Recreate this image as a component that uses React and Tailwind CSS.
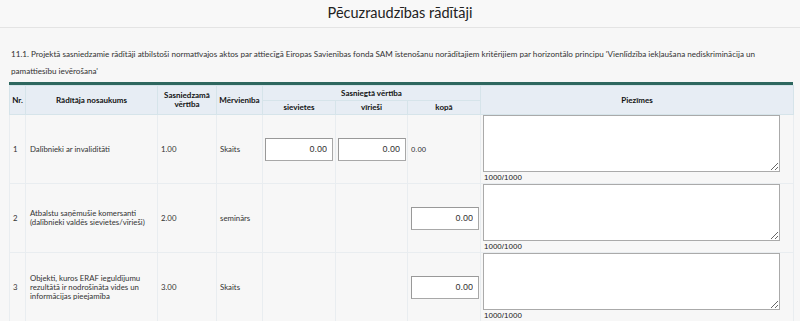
import { useState } from 'react';

const rows = [
  {
    nr: '1',
    name: 'Dalībnieki ar invaliditāti',
    target: '1.00',
    unit: 'Skaits',
    split: true,
  },
  {
    nr: '2',
    name: 'Atbalstu saņēmušie komersanti (dalībnieki valdēs sievietes/vīrieši)',
    target: '2.00',
    unit: 'seminārs',
    split: false,
  },
  {
    nr: '3',
    name: 'Objekti, kuros ERAF ieguldījumu rezultātā ir nodrošināta vides un informācijas pieejamība',
    target: '3.00',
    unit: 'Skaits',
    split: false,
  },
];

const th = 'border border-[#d6e4ea] font-bold text-[8px] leading-[9px] text-[#111] text-center align-middle';
const td = 'border border-[#e9edf0] text-[7.8px] leading-[9px] text-[#333] align-middle';

const NumInput = () => (
  <input
    type="text"
    defaultValue="0.00"
    className="w-[68px] h-[23px] border border-[#a8a8a8] border-t-[#999] border-l-[#999] bg-white text-right pr-[5px] text-[9px] text-[#333] font-['Liberation_Sans',Arial,sans-serif] outline-none"
  />
);

const Notes = () => {
  const [text, setText] = useState('');
  return (
    <div className="flex flex-col pl-[2px]">
      <textarea
        value={text}
        onChange={(e) => setText(e.target.value)}
        className="block w-[297px] h-[57px] border border-[#aaa] bg-white resize-y outline-none"
      />
      <span className="pl-[1px] text-[8px] leading-[11px] text-[#222] font-['Liberation_Sans',Arial,sans-serif]">
        {1000 - text.length}/1000
      </span>
    </div>
  );
};

const App = () => {
  return (
    <div className="min-h-screen bg-[#f7f7f7] font-['Lato',sans-serif]">
      <div className="h-[28px] bg-[#f8f8f8] border-b border-[#e4e4e4] flex items-center justify-center">
        <h1 className="text-[14.5px] leading-none text-[#222] pb-[1px]">Pēcuzraudzības rādītāji</h1>
      </div>

      <div className="px-[9px] pt-[18px]">
        <p className="pl-[2px] max-w-[768px] text-[8.1px] leading-[17px] text-[#333]">
          11.1. Projektā sasniedzamie rādītāji atbilstoši normatīvajos aktos par attiecīgā Eiropas Savienības fonda SAM īstenošanu norādītajiem kritērijiem par horizontālo principu 'Vienlīdzība iekļaušana nediskriminācija un pamattiesību ievērošana'
        </p>

        <div className="mt-[2px] w-[784px] border-t-[3px] border-[#2e675f]">
          <table className="w-[784px] table-fixed border-collapse">
            <colgroup>
              <col className="w-[16px]" />
              <col className="w-[132px]" />
              <col className="w-[59px]" />
              <col className="w-[46px]" />
              <col className="w-[73px]" />
              <col className="w-[72px]" />
              <col className="w-[73px]" />
              <col className="w-[313px]" />
            </colgroup>
            <thead className="bg-[#e7edf4]">
              <tr className="h-[15px]">
                <th rowSpan={2} className={th}>Nr.</th>
                <th rowSpan={2} className={th}>Rādītāja nosaukums</th>
                <th rowSpan={2} className={th}>Sasniedzamā vērtība</th>
                <th rowSpan={2} className={th}>Mērvienība</th>
                <th colSpan={3} className={th}>Sasniegtā vērtība</th>
                <th rowSpan={2} className={th}>Piezīmes</th>
              </tr>
              <tr className="h-[14px]">
                <th className={th}>sievietes</th>
                <th className={th}>vīrieši</th>
                <th className={th}>kopā</th>
              </tr>
            </thead>
            <tbody>
              {rows.map((r) => (
                <tr key={r.nr} className="h-[69px]">
                  <td className={`${td} pl-[3px]`}>{r.nr}</td>
                  <td className={`${td} pl-[4px] pr-[2px]`}>{r.name}</td>
                  <td className={`${td} pl-[3px]`}>{r.target}</td>
                  <td className={`${td} pl-[3px]`}>{r.unit}</td>
                  <td className={`${td} pl-[2px]`}>{r.split && <NumInput />}</td>
                  <td className={`${td} pl-[2px]`}>{r.split && <NumInput />}</td>
                  <td className={`${td} pl-[3px] font-['Liberation_Sans',Arial,sans-serif]`}>
                    {r.split ? '0.00' : <NumInput />}
                  </td>
                  <td className={`${td} align-top p-0`}>
                    <Notes />
                  </td>
                </tr>
              ))}
            </tbody>
          </table>
        </div>
      </div>
    </div>
  );
};

export default App;
